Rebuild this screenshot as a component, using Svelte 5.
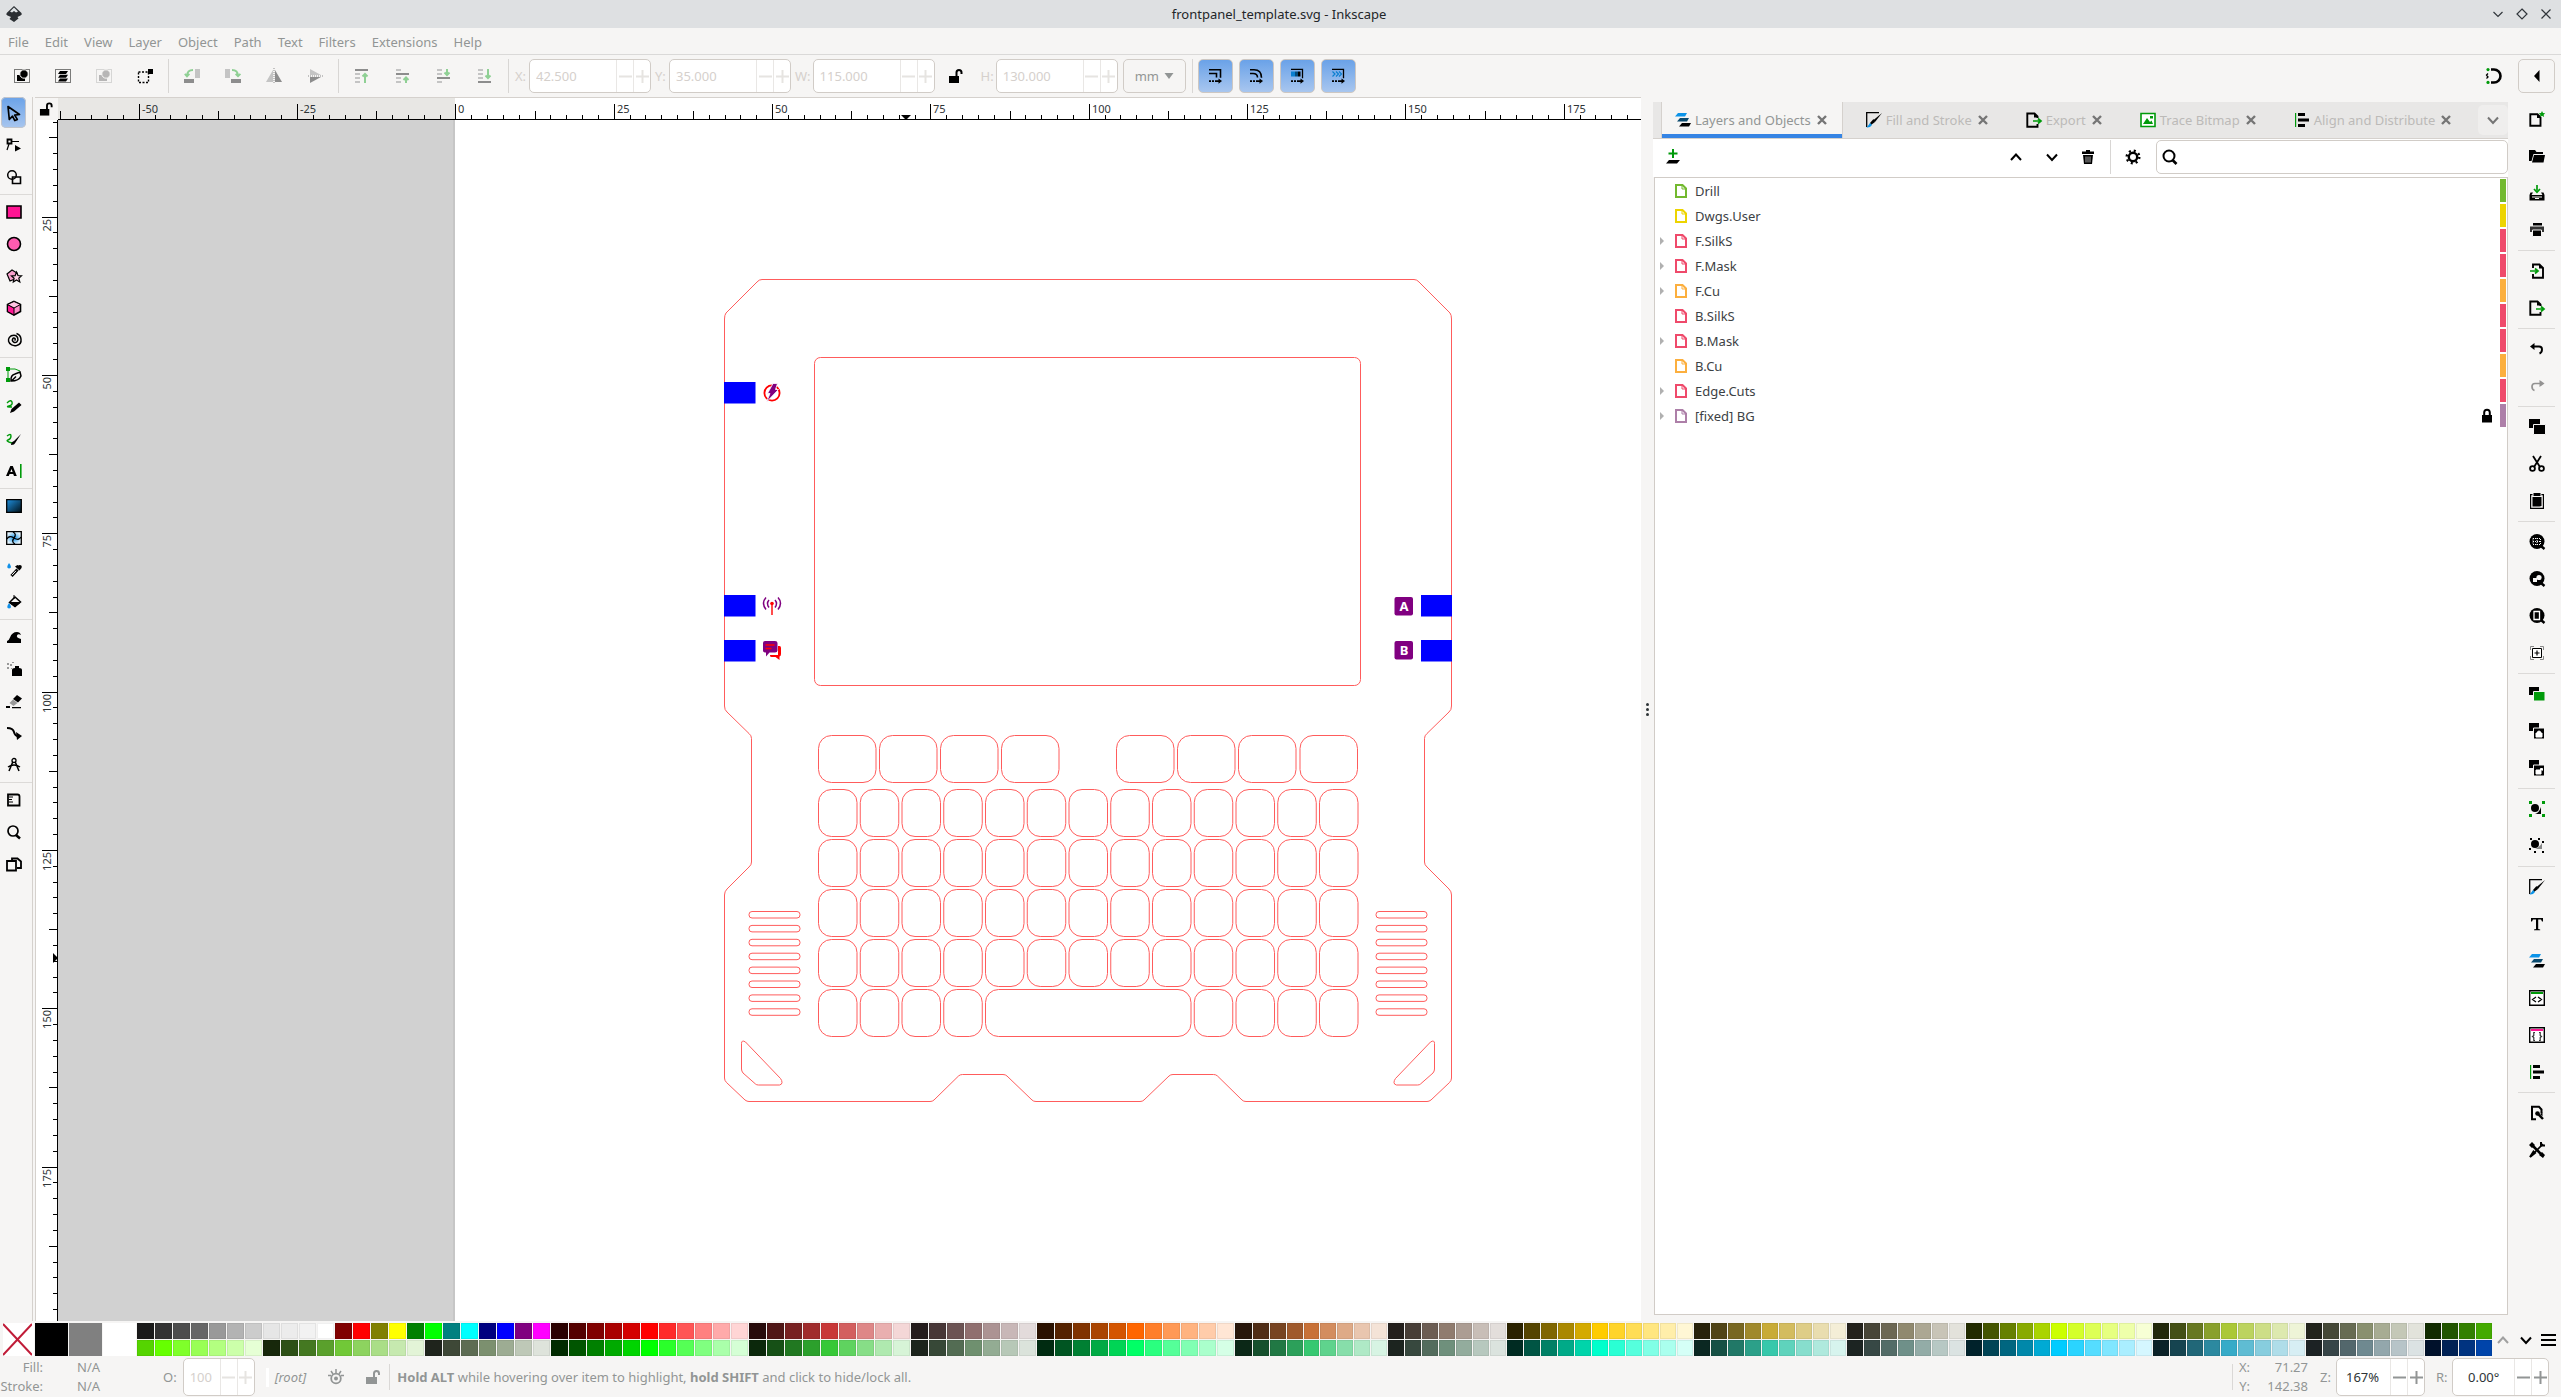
<script>
  const moveArrow = '<path d="M2 12.200h2v1.800H2zM5 12.200h2v1.800H5zM8 12.200h3.500V10.500L15 13.100l-3.500 2.700V14H8z"/>';
  const icons = {
    selAll: '<path d="M.5 1.5h15v13H.5z" fill="none" stroke="#000" stroke-dasharray="1 1"/><path d="M3 7h8v6H3z"/><circle cx="10" cy="6" r="4.2" stroke="#f6f5f4"/>',
    selLayers: '<path d="M.5 1.5h15v13H.5z" fill="none" stroke="#000" stroke-dasharray="1 1"/><path d="M5 3h8l-2 3H3zM5 6.8h8l-2 3H3zM5 10.500h8l-2 3H3z"/>',
    desel: '<g opacity=".25"><path d="M.5 1.5h15v13H.5z" fill="none" stroke="#000" stroke-dasharray="1 1"/><path d="M3 7h8v6H3z"/><circle cx="10" cy="6" r="4.2" stroke="#f6f5f4"/></g>',
    selBox: '<path d="M1.500 4h10v10.500h-10z" fill="none" stroke="#000" stroke-width="1.400" stroke-dasharray="2 1.500"/><path d="M11 1h5v5h-5z"/>',
    rotL: '<path d="M0 11h10v4H0z" fill="#8d8d8d"/><path d="M11 1h5v9h-5z" fill="#c4c4c4"/><path d="M9 2Q3 2 3 8M.8 5.800L3 8.300l2.400-2.500" fill="none" stroke="#8fd094" stroke-width="1.800"/>',
    rotR: '<path d="M6 11h10v4H6z" fill="#8d8d8d"/><path d="M0 1h5v9H0z" fill="#c4c4c4"/><path d="M7 2q6 0 6 6M10.600 5.800L13 8.300l2.400-2.500" fill="none" stroke="#8fd094" stroke-width="1.800"/>',
    flipH: '<path d="M7 2v12H0z" fill="#c4c4c4"/><path d="M9 2v12h7z" fill="#8d8d8d"/><path d="M8 0v16" stroke="#8d8d8d" stroke-dasharray="1 1"/>',
    flipV: '<path d="M3 1v6h11z" fill="#c4c4c4"/><path d="M3 15V9h11z" fill="#8d8d8d"/><path d="M1 8h15" stroke="#8d8d8d" stroke-dasharray="1 1"/>',
    top: '<path d="M1 1h13v2H1z" fill="#8d8d8d"/><path d="M1 5h5v2H1zM1 9h5v2H1zM1 13h5v2H1z" fill="#c4c4c4"/><path d="M11 15V6M8.500 8.500L11 6l2.500 2.500" fill="none" stroke="#8fd094" stroke-width="2"/>',
    raise: '<path d="M1 5h13v2H1z" fill="#8d8d8d"/><path d="M1 1h5v2H1zM1 9h5v2H1zM1 13h5v2H1z" fill="#c4c4c4"/><path d="M11 15V9.500M8.500 12L11 9.500 13.500 12" fill="none" stroke="#8fd094" stroke-width="2"/>',
    lower: '<path d="M1 9h13v2H1z" fill="#8d8d8d"/><path d="M1 1h5v2H1zM1 5h5v2H1zM1 13h5v2H1z" fill="#c4c4c4"/><path d="M11 1v6M8.500 4.500L11 7l2.500-2.500" fill="none" stroke="#8fd094" stroke-width="2"/>',
    bottom: '<path d="M1 13h13v2H1z" fill="#8d8d8d"/><path d="M1 1h5v2H1zM1 5h5v2H1zM1 9h5v2H1z" fill="#c4c4c4"/><path d="M11 1v9M8.500 7.500L11 10l2.500-2.500" fill="none" stroke="#8fd094" stroke-width="2"/>',
    unlock: '<path d="M1 8h10v7H1z"/><path d="M8.500 8V4.500a2.500 2.500 0 0 1 5 0V6" fill="none" stroke="#000" stroke-width="2"/>',
    lock: '<path d="M3 7h10v7.500H3z"/><path d="M5.200 7V4.500a2.800 2.800 0 0 1 5.600 0V7" fill="none" stroke="#000" stroke-width="2"/>',
    tStroke: '<path d="M2 1.800h11.500v8M2 5.500h7.500v4" fill="none" stroke="#000" stroke-width="1.600"/>' + moveArrow,
    tCorner: '<path d="M2 1.800h4q7.500 0 7.500 8M2 5.500h3q4.500 0 4.500 4" fill="none" stroke="#000" stroke-width="1.600"/>' + moveArrow,
    tGrad: '<path d="M2 1.300h11.500v9" fill="none" stroke="#000" stroke-width="1.300"/><path d="M2 3.500h4v5H2z" fill="#0b7fd0"/><path d="M6 3.500h3v5H6z" fill="#054b7c"/><path d="M9 3.500h2.500v5H9z"/>' + moveArrow,
    tPat: '<path d="M2 1.300h11.500v9" fill="none" stroke="#000" stroke-width="1.300"/><path d="M2.500 3.500L5 6 2.500 8.500M6 3.500L8.500 6 6 8.500M9 3.500L11.500 6 9 8.500" fill="none" stroke="#0b7fd0" stroke-width="1.200"/>' + moveArrow,
    snap: '<path d="M6 1.500h3a6.500 6.500 0 0 1 0 13H6" fill="none" stroke="#000" stroke-width="2.600"/><path d="M3 5.500L1.500 7 3 9l-1.500 1.500" fill="none" stroke="#000" stroke-width="1.300"/><circle cx="3" cy="1.600" r="1.600" fill="#009a0a"/><circle cx="3" cy="14.400" r="1.600" fill="#009a0a"/>',
    tri: '<path d="M10.500 2v12L5 8z"/>',
    arrow: '<path d="M2 1.500l11.500 8-4.800.6 2.600 4.300-2.500 1.200-2.300-4.400-3.200 3.300z" fill="none" stroke="#000" stroke-width="1.700" stroke-linejoin="round"/>',
    node: '<path d="M1.500 2.500h4v4h-4z" fill="none" stroke="#000" stroke-width="1.800"/><path d="M6 4.500h7M3 7q-1 3-2 6" fill="none" stroke="#000" stroke-width="1.200"/><path d="M9 8l6 3.500-6 3z"/>',
    shapes: '<circle cx="6" cy="6" r="4.300" fill="none" stroke="#000" stroke-width="1.500"/><path d="M6.500 8h8v6.500h-8z" fill="none" stroke="#000" stroke-width="1.600"/>',
    rect: '<path d="M1 2h14v12H1z" fill="#ff1493" stroke="#000" stroke-width="1.600"/>',
    circle: '<circle cx="8" cy="8" r="6.500" fill="#ff5cb0" stroke="#000" stroke-width="1.600"/>',
    star: '<path d="M1 6l5-4 5 3v5l-7 3z" fill="#f8a0cc" stroke="#000" stroke-width="1.200"/><path d="M10.500 4l1.500 3.500 3.500.3-2.700 2.400 1 3.800-3.300-2-3.200 2 .8-3.800L5.500 8l3.600-.4z" fill="#ffd0e6" stroke="#000" stroke-width="1.200"/>',
    cube: '<path d="M8 1.500l6.500 3v7L8 15l-6.500-3.500v-7z" fill="#ff8cc8" stroke="#000" stroke-width="1.600"/><path d="M1.500 4.500L8 8v7l-6.500-3.500z" fill="#ff1493" stroke="#000"/><path d="M8 8l6.500-3.500L8 1.500l-6.500 3z" fill="#ffc4e2" stroke="#000"/>',
    spiral: '<path d="M8.500 8.500a1.300 1.300 0 1 0-1.800-1.600c-1.300 2.800 2.300 4.800 4.300 2.800s.7-6.400-3-6.400C3.500 3.300 2 6.800 2.600 9.300c.9 3.400 4.600 4.900 8 4.200 3.200-.8 4.800-3.600 4.400-6.500-.3-2.600-2-4.700-4.500-5.500" fill="none" stroke="#000" stroke-width="1.500"/>',
    pen: '<path d="M2 3v9M2 2q8-1 12 2" fill="none" stroke="#009a0a"/><path d="M0 0h4v4H0zM0 11h4v4H0z" fill="#009a0a"/><path d="M5 14q-.5-6 4-7l5-2 1 4q-2 5-10 5zM5.500 14L10 9.500" fill="none" stroke="#000" stroke-width="1.500"/>',
    pencil: '<path d="M1 4q4-4 5-1t-3 4 3 1" fill="none" stroke="#009a0a" stroke-width="1.400"/><path d="M4 14l1.500-4L13 3.500l2.500 2.500L8 12.500z"/>',
    brush: '<path d="M1 5q4-3 4 0t-3 4 4 3" fill="none" stroke="#009a0a" stroke-width="1.400"/><path d="M5 14q0-3 3-4l7-7-5.500 8.500q-1 2.500-4.500 2.500z"/>',
    text: '<path d="M0 13L4.300 3h2.500l4 10H8l-.8-2H3.600l-.8 2zM4.300 9h2.300L5.500 6z"/><path d="M14 1h1.600v14H14z" fill="#009a0a"/>',
    grad: '<defs><linearGradient id="ga" x2="1" y2="1"><stop stop-color="#1e90e0"/><stop offset="1" stop-color="#001018"/></linearGradient></defs><path d="M.7 1.700h14.600v12.600H.7z" fill="url(#ga)" stroke="#000" stroke-width="1.300"/>',
    mesh: '<defs><radialGradient id="gm"><stop stop-color="#0a90ea"/><stop offset="1" stop-color="#e6f4fd"/></radialGradient></defs><path d="M.7 1.700h14.600v12.600H.7z" fill="url(#gm)" stroke="#000" stroke-width="1.300"/><path d="M8 8Q3 5 1 9M8 8q5 3 7-1M8 8q3-4-1-6M8 8q-3 4 1 6" fill="none" stroke="#000" stroke-width="1.300"/>',
    dropper: '<path d="M3 1q4 5 0 5.500Q-.5 6 3 1z" fill="#1090e8"/><path d="M5.500 14l6-6.500" stroke="#000" stroke-width="3"/><path d="M9 4.500l4.500 4 2-2.500q1-3-2-3l-1 .5-1-.5z"/><path d="M6 13.200l4-4.400" stroke="#fff"/>',
    bucket: '<path d="M3 9q4 5 0 5.500Q-.5 14 3 9z" fill="#1090e8"/><path d="M3.500 8.500L9 3l5.500 5L9 12.500z" fill="none" stroke="#000" stroke-width="1.500"/><path d="M4 8.500h10L9 12.500zM8 5V1" stroke="#000"/>',
    tweak: '<path d="M1 14v-2q2-.5 3-3.500Q6 3 11 3q3 0 4 3-3-1.500-4 .5t4 3.500v4z"/>',
    spray: '<path d="M6 9q0-2 3-2V5h4v2q3 0 3 2v6H6z"/><path d="M1 2h2v2H1zM4 3h2v2H4zM1 6h2v2H1zM5 7h1v1H5zM6 1h2v1H6z" fill="#999"/>',
    eraser: '<path d="M7 6l4-4 5 3.500-4 4z"/><path d="M7 6.500L3.500 10l4 3L11.500 10z" fill="#999"/><path d="M0 13h4v2H0zM6 14h9v1.300H6z"/>',
    conn: '<path d="M1 3q6 0 7 4t4 4" fill="none" stroke="#000" stroke-width="2"/><path d="M10 7l6 4-5 4z"/>',
    measure: '<path d="M8 2L3 14M8 2l5 12M2 10q6-4 12 0" fill="none" stroke="#000" stroke-width="1.500"/><circle cx="8" cy="3.500" r="2" fill="#fff" stroke="#000" stroke-width="1.300"/>',
    pages: '<path d="M2 2.500h9.500q2 0 2 2v9H2z" fill="none" stroke="#000" stroke-width="1.800"/><path d="M3 5h4M3 7.500h3M3 10h4" stroke="#000" stroke-width="1.200"/>',
    zoom: '<circle cx="7" cy="7" r="5" fill="none" stroke="#000" stroke-width="1.700"/><path d="M10 11l4 3.500" stroke="#000" stroke-width="2.500"/>',
    page2: '<path d="M6 4V2.500h5.500l3.500 3V12h-4M1 5h9v9.500H1z" fill="none" stroke="#000" stroke-width="1.800"/>',
    newdoc: '<path d="M1.300 3.300h7.200l3 3v8.400H1.300z" fill="none" stroke="#000" stroke-width="1.900"/><path d="M8 3v4h4z"/><path d="M13 0l1 2 2.200.2-1.600 1.500.5 2.200L13 4.800l-2 1.100.4-2.200L9.800 2.200 12 2z" fill="#009a0a"/>',
    open: '<path d="M0 2h6l1.500 2H14v2H4.500L2.500 13H0z"/><path d="M5 7h11l-1.500 7.500H3z"/>',
    save: '<path d="M8 0v5.500M5 4l3 3.300L11 4" fill="none" stroke="#009a0a" stroke-width="1.700"/><path d="M1.500 7.500H4L2.500 10h11L12 7.500h2.500L15.500 10v5.500H.5V10z"/><path d="M3 12h10M6 13.500h4" stroke="#f6f5f4"/>',
    print: '<path d="M4 1h9v2.500H4z"/><path d="M1 4.500h14V10H1z" fill="#333"/><path d="M3.500 8h9v6.500h-9z" stroke="#f6f5f4"/>',
    imp: '<path d="M4 5V1.500h6.500L14 5v9.700H4V11" fill="none" stroke="#000" stroke-width="1.900"/><path d="M10 1v4.500h4.500z"/><path d="M1 8h7M6 5.500L9 8l-3 2.500" fill="none" stroke="#009a0a" stroke-width="1.700"/>',
    exp: '<path d="M11.500 6V4.500l-3-3H1.300v13.200h10.200V12" fill="none" stroke="#000" stroke-width="1.900"/><path d="M8 1v4.500h4.500z"/><path d="M7 9h7M12 6.500L15 9l-3 2.500" fill="none" stroke="#009a0a" stroke-width="1.700"/>',
    undo: '<path d="M4 5.500h6q3 0 3 3t-2.500 4" fill="none" stroke="#000" stroke-width="1.900"/><path d="M5.500 2v7L1 5.500z"/>',
    redo: '<g opacity=".4"><path d="M12 5.500H6q-3 0-3 3t2.500 4" fill="none" stroke="#000" stroke-width="1.700"/><path d="M10.500 2v7L15.500 5.500z"/></g>',
    copy: '<path d="M0 0h11v9H0z"/><path d="M4.500 5.500h12v10h-12z" stroke="#f6f5f4"/>',
    cut: '<path d="M4 0l7 11M12 0L5 11" stroke="#000" stroke-width="1.800"/><circle cx="3.500" cy="12.500" r="2.400" fill="none" stroke="#000" stroke-width="1.800"/><circle cx="12.500" cy="12.500" r="2.400" fill="none" stroke="#000" stroke-width="1.800"/>',
    paste: '<path d="M3.500 1.600H1.600v13.800h12.800V1.600h-2" fill="none" stroke="#000" stroke-width="1.200"/><path d="M3.500 4h9v9q-1 0-2 .5h-7zM4.500 0h7v3h-7z"/>',
    zoomSel: '<circle cx="8" cy="7.500" r="7.500"/><path d="M12 12l3.500 3" stroke="#000" stroke-width="2.400"/><path d="M4 4.500h7.500v6H4z" fill="none" stroke="#fff" stroke-dasharray="1 1"/><path d="M4 7.500h8M8 4v7" stroke="#fff" stroke-dasharray="1 1"/>',
    zoomDraw: '<circle cx="8" cy="7.500" r="7.500"/><path d="M12 12l3.500 3" stroke="#000" stroke-width="2.400"/><circle cx="10" cy="6.500" r="2.600" fill="#f6f5f4"/><path d="M4 7h4v4H4z" fill="#f6f5f4"/>',
    zoomPage: '<circle cx="8" cy="7.500" r="7.500"/><path d="M12 12l3.500 3" stroke="#000" stroke-width="2.400"/><path d="M5 3.500h5.500v8H5z" fill="none" stroke="#fff" stroke-width="1.300"/>',
    zoomCenter: '<path d="M3.500 3.500h9v9h-9z" fill="#fff" stroke="#000"/><path d="M8 5.500v5M5.500 8h5" stroke="#000" stroke-width="1.200"/><path d="M1.500 5V1.500H5M11 1.500h3.500V5M14.500 11v3.500H11M5 14.500H1.500V11" fill="none" stroke="#888"/>',
    dup: '<path d="M0 1h10v8H0z"/><path d="M4.500 5.500H16V15H4.500z" fill="#009a0a" stroke="#f6f5f4"/>',
    clone: '<path d="M0 0h10v8H0z"/><path d="M4.500 5h11v11h-11z" stroke="#f6f5f4"/><path d="M7 10h6v4H7zM8.500 10V8.700q1.500-1.500 3 0V10" fill="#fff" stroke="#fff"/>',
    unclone: '<path d="M0 0h10v8H0z"/><path d="M4.500 5h11v11h-11z" stroke="#f6f5f4"/><path d="M7 10h5v4H7zM11.500 10V8.500h2v2" fill="#fff" stroke="#fff"/>',
    group: '<path d="M0 0h3v3H0zM13 0h3v3h-3zM0 13h3v3H0zM13 13h3v3h-3z" fill="#009a0a"/><circle cx="6" cy="7" r="4"/><path d="M12 6v7H6q4-1 6-7z"/>',
    ungroup: '<path d="M1 0h2v2H1zM9 0h2v2H9zM13 3h2v2h-2zM0 10h2v2H0zM5 13h2v2H5zM13 13h2v2h-2z"/><circle cx="6" cy="6" r="4"/><path d="M13 5v6H6q4-1 7-6z" fill="#888"/>',
    fill: '<path d="M.7 15V.7H13" fill="none" stroke="#000" stroke-width="1.300"/><path d="M16 1L9 10l-2-1.500z"/><path d="M7.500 7L9 10l-4 3-1-2z"/><path d="M4 11l2 2q-2 3-5.500 2.500Q2 14 4 11z" fill="#0b93e8"/>',
    tt: '<path d="M2 2h12v3.500h-1L12 3.500H9.200V13l2 .5v.8H5v-.8l2-.5V3.500H4L3 5.500H2z"/>',
    layers: '<path d="M3 1h9l-2 3.500H0z" fill="#0b93e8"/><path d="M5 6h9l-2 3.500H2z" fill="#0a4a6e"/><path d="M7 11h9l-2 3.500H4z"/>',
    xml: '<path d="M.7.700h14.600v14.600H.7z" fill="#fff" stroke="#000" stroke-width="1.400"/><path d="M2 2h12v2H2z" fill="#009a0a"/><path d="M7 7l-3.500 2.500L7 12M9 7l3.500 2.500L9 12" fill="none" stroke="#000" stroke-width="1.200"/>',
    selectors: '<path d="M.7.700h14.600v14.600H.7z" fill="#fff" stroke="#000" stroke-width="1.400"/><path d="M2 2h12v2H2z" fill="#ff1493"/><path d="M6 5.500H4.800v3L3.500 9.500l1.300 1v3H6M10 5.500h1.200v3l1.300 1-1.300 1v3H10" fill="none" stroke="#333" stroke-width="1.200"/>',
    align: '<path d="M1 1h1.200v14H1z" fill="#009a0a"/><path d="M4 1h7v3H4zM4 6.500h11v3H4zM4 12h7v3H4z"/>',
    docprops: '<path d="M12.500 8V4.500L10 1.800H3v12.500h4" fill="none" stroke="#000" stroke-width="2"/><path d="M9 9l5 5" stroke="#000" stroke-width="2.400"/><circle cx="8.500" cy="8.500" r="2.300"/><path d="M11 9l2.500-1.500v4z"/>',
    prefs: '<path d="M3 3l10 10" stroke="#000" stroke-width="2.600"/><path d="M2 14L14 2" stroke="#000" stroke-width="1.600"/><path d="M1 15l5-4-1.500-1.500z" stroke="#000" stroke-width="2"/><path d="M0 3l3-3 3 3-3 3zM10 13l3-3 3 3-2 3z"/><path d="M12 0v3.500h4" fill="none" stroke="#000" stroke-width="2"/>',
    trace: '<path d="M1 1.500h14v13H1z" fill="#fff" stroke="#009a0a" stroke-width="1.600"/><path d="M3 12l4-6 3 4 1.500-1.500L13 12zM10 4h3v2.500h-3z" fill="#009a0a"/>',
    addLayer: '<path d="M8 0v9M3.500 4.500h9" stroke="#009a0a" stroke-width="2"/><path d="M4 11h11l-3 3.500H1z"/>',
    up: '<path d="M3 11l5-5.500 5 5.500" fill="none" stroke="currentColor" stroke-width="2"/>',
    down: '<path d="M3 5.500L8 11l5-5.500" fill="none" stroke="currentColor" stroke-width="2"/>',
    trash: '<path d="M2 2.500h12V5H2zM6 1h4v2H6z"/><path d="M3 6h10l-1 9H4z"/><path d="M6 7.500v6M8 7.500v6M10 7.500v6" stroke="#aaa"/>',
    gear: '<circle cx="8" cy="8" r="4.200" fill="none" stroke="#000" stroke-width="2.400"/><circle cx="8" cy="8" r="6.300" fill="none" stroke="#000" stroke-width="2.400" stroke-dasharray="2 2.950"/>',
    search: '<circle cx="7" cy="7" r="5.500" fill="none" stroke="#000" stroke-width="2"/><path d="M10.500 11l4 4" stroke="#000" stroke-width="2.600"/>',
    eye: '<circle cx="8" cy="9.500" r="4.800" fill="none" stroke="#929595" stroke-width="1.800"/><circle cx="8" cy="9.500" r="2" fill="#929595"/><path d="M8 0v4M3 2l2 3M13 2l-2 3M0 6.500h3M13 6.500h3" stroke="#929595" stroke-width="1.500"/>',
    statusLock: '<path d="M1 8h11v7H1z" fill="#929595"/><path d="M9 8V4.500a2.500 2.500 0 0 1 5 0V6" fill="none" stroke="#929595" stroke-width="2"/>',
    close: '<path d="M4 4l8 8M12 4l-8 8" stroke="#757575" stroke-width="2.400"/>',
    logo: '<path d="M8 0l7.500 7q1 1.500-1 2.500l-3 1.500 1 1.500L8 16l-4.500-3L5 11 1.500 9.500Q-.5 8.500.7 7z" fill="#2b2f33"/><path d="M8 1.500L4 5.500l2 1 2-1.500 2 1.500 2-1z" fill="#dfe3e6"/>'
  };

  const menus = ['File', 'Edit', 'View', 'Layer', 'Object', 'Path', 'Text', 'Filters', 'Extensions', 'Help'];
  const bar = [
    [['selAll', 'Select all'], ['selLayers', 'Select all in all layers'], ['desel', 'Deselect'], ['selBox', 'Toggle touch selection']],
    [['rotL', 'Rotate left'], ['rotR', 'Rotate right'], ['flipH', 'Flip horizontal'], ['flipV', 'Flip vertical']],
    [['top', 'Raise to top'], ['raise', 'Raise'], ['lower', 'Lower'], ['bottom', 'Lower to bottom']]
  ];
  const toggles = [['tStroke', 'Scale stroke width'], ['tCorner', 'Scale rounded corners'], ['tGrad', 'Move gradients'], ['tPat', 'Move patterns']];
  const tools = [
    ['arrow', 'node', 'shapes'],
    ['rect', 'circle', 'star', 'cube', 'spiral'],
    ['pen', 'pencil', 'brush', 'text'],
    ['grad', 'mesh', 'dropper', 'bucket'],
    ['tweak', 'spray', 'eraser', 'conn', 'measure'],
    ['pages', 'zoom', 'page2']
  ];
  const commands = [
    ['newdoc', 'open', 'save', 'print'],
    ['imp', 'exp'],
    ['undo', 'redo'],
    ['copy', 'cut', 'paste'],
    ['zoomSel', 'zoomDraw', 'zoomPage', 'zoomCenter'],
    ['dup', 'clone', 'unclone'],
    ['group', 'ungroup'],
    ['fill', 'tt', 'layers', 'xml', 'selectors', 'align'],
    ['docprops', 'prefs']
  ];
  const tabs = [
    ['layers', 'Layers and Objects'],
    ['fill', 'Fill and Stroke'],
    ['exp', 'Export'],
    ['trace', 'Trace Bitmap'],
    ['align', 'Align and Distribute']
  ];
  const layers = [
    { name: 'Drill', color: '#73b92f' },
    { name: 'Dwgs.User', color: '#edd400' },
    { name: 'F.SilkS', color: '#ef4a6b', kids: true },
    { name: 'F.Mask', color: '#ef4a6b', kids: true },
    { name: 'F.Cu', color: '#fcaf3e', kids: true },
    { name: 'B.SilkS', color: '#ef4a6b' },
    { name: 'B.Mask', color: '#ef4a6b', kids: true },
    { name: 'B.Cu', color: '#fcaf3e' },
    { name: 'Edge.Cuts', color: '#ef4a6b', kids: true },
    { name: '[fixed] BG', color: '#ad7fa8', kids: true, locked: true }
  ];

  // Ruler ticks: one every 2.5 mm, 25 mm = 158.33 px at 167 %
  let hWidth = $state(0);
  let vHeight = $state(0);
  const ticks = (origin, from, length) => {
    const out = [];
    for (let k = from; ; k++) {
      const at = Math.round(origin + (k * 158.333) / 10);
      if (at >= length) return out;
      out.push({ at, size: k % 10 === 0 ? 2 : k % 5 === 0 ? 1 : 0, label: k * 2.5, fits: at + 26 < length });
    }
  };
  const hTicks = $derived(ticks(397.4, -25, hWidth));
  const vTicks = $derived(ticks(-61.8, 4, vHeight));

  // Palette: per hue a vivid, a muted and a greyish ramp
  const hueRamps = (h) => [
    ...[8.4, 16.7, 25, 33.3, 41.6, 50, 58.2, 66.7, 75, 83.3, 91.8].map((l) => `hsl(${h} 100% ${l}%)`),
    ...[10, 20, 30, 40, 50, 60, 70, 80, 90].map((l) => `hsl(${h} 57% ${l}%)`),
    ...[12.5, 25, 37.5, 50, 62.5, 75, 87.5].map((l) => `hsl(${h} 13% ${l}%)`)
  ];
  const greys = ['#1a1a1a', '#333', '#4d4d4d', '#666', '#999', '#b3b3b3', '#ccc', '#e6e6e6', '#ececec', '#f2f2f2', '#fff'];
  const basics = ['#800000', '#f00', '#808000', '#ff0', '#008000', '#0f0', '#008080', '#0ff', '#000080', '#00f', '#800080', '#f0f'];
  const swatches = [...greys, ...basics, ...[0, 24, 48, 72, 96, 120, 144, 168, 192, 216].flatMap(hueRamps)].slice(0, 270);

  // Keyboard cut-outs
  const col = (c) => 818.5 + c * 41.75;
  const keys = [];
  for (const x of [818.5, 879.5, 940.5, 1001.5, 1116.5, 1177.5, 1238.5, 1300]) keys.push({ x, y: 735.5, w: 57.5 });
  for (let r = 0; r < 5; r++)
    for (let c = 0; c < 13; c++) if (r < 4 || c < 4 || c > 8) keys.push({ x: col(c), y: 789.5 + r * 50, w: 38.5 });
  keys.push({ x: col(4), y: 989.5, w: 205.5 });
  const vents = Array.from({ length: 8 }, (_, i) => 911.5 + i * 13.9);
</script>

{#snippet icon(name)}
  <svg class="icon" viewBox="0 0 16 16" aria-hidden="true">{@html icons[name]}</svg>
{/snippet}

{#snippet spin(label, value, cls)}
  <label class="field {cls}">
    <span class="lbl">{label}</span>
    <span class="spin">
      <input type="text" {value} />
      <button type="button" aria-label="Decrease {label}"><svg class="pm" viewBox="0 0 13 13"><path d="M0 6.500h13" /></svg></button>
      <button type="button" aria-label="Increase {label}"><svg class="pm" viewBox="0 0 13 13"><path d="M0 6.500h13M6.500 0v13" /></svg></button>
    </span>
  </label>
{/snippet}

{#snippet halfBoard()}
  <path d="M1088 279.500H762q-3 0-5 2.500L726 313q-1.500 2-1.500 6V706q0 4 2.500 6L749 733.500q2.500 2 2.500 5V862q0 3-2.500 5L727 889q-2.500 2.500-2.500 6V1078q0 2.500 2 4.500L745 1100q2 1.500 4 1.500H930q2.500 0 4-1.500L958.500 1076q1.500-1.500 4-1.500H1003q2.500 0 4 1.500L1032 1100q1.500 1.500 4 1.500H1088" />
  {#each vents as y}
    <rect x="749" {y} width="51" height="6.500" rx="3" />
  {/each}
  <path d="M741.500 1069V1043.500q0-4 4-1.500L780.500 1078.500q1.500 2 1.500 4t-2.500 2.500H758.500q-2 0-3-1L743 1073q-1.500-2-1.500-4z" />
{/snippet}

<div class="app">
  <header class="title">
    {@render icon('logo')}
    <h1>frontpanel_template.svg - Inkscape</h1>
    <div class="winbtns">
      <button type="button" aria-label="Minimize"><svg viewBox="0 0 12 12"><path d="M1.500 4L6 8.500 10.500 4" /></svg></button>
      <button type="button" aria-label="Maximize"><svg viewBox="0 0 12 12"><path d="M6 1l5 5-5 5-5-5z" /></svg></button>
      <button type="button" aria-label="Close"><svg viewBox="0 0 12 12"><path d="M1.500 1.500l9 9M10.500 1.500l-9 9" /></svg></button>
    </div>
  </header>

  <nav class="menu">
    {#each menus as m}<button type="button">{m}</button>{/each}
  </nav>

  <div class="body">
    <div class="main">
      <div class="toolbar">
        {#each bar as grp}
          {#each grp as [n, t]}
            <button type="button" class="tb" aria-label={t}>{@render icon(n)}</button>
          {/each}
          <i class="vsep"></i>
        {/each}
        {@render spin('X:', '42.500', 'dim')}
        {@render spin('Y:', '35.000', 'dim')}
        {@render spin('W:', '115.000', 'dim')}
        <button type="button" class="ratio" aria-label="Lock ratio">{@render icon('unlock')}</button>
        {@render spin('H:', '130.000', 'dim')}
        <span class="unit">
          <select aria-label="Unit"><option>mm</option></select>
          <svg viewBox="0 0 12 8"><path d="M0 0h12L6 8z" /></svg>
        </span>
        <i class="vsep unitsep"></i>
        {#each toggles as [n, t]}
          <button type="button" class="toggle" aria-pressed="true" aria-label={t}>{@render icon(n)}</button>
        {/each}
        <button type="button" class="tb snap" aria-label="Snapping">{@render icon('snap')}</button>
      </div>

      <div class="work">
        <div class="tools">
          {#each tools as grp, g}
            {#if g}<hr />{/if}
            {#each grp as n}
              <button type="button" class:active={n === 'arrow'} aria-label={n}>{@render icon(n)}</button>
            {/each}
          {/each}
        </div>

        <div class="frame">
          <div class="corner">{@render icon('unlock')}</div>
          <div class="ruler" bind:clientWidth={hWidth}>
            <svg class="hruler" aria-label="Horizontal ruler">
              <rect class="page" x="397" width="100%" height="22" />
              {#each hTicks as t}
                <rect x={t.at} y={[17, 13, 6][t.size]} width="1" height={[4, 8, 15][t.size]} />
                {#if t.size === 2 && t.fits}<text x={t.at + 3} y="15">{t.label}</text>{/if}
              {/each}
              <rect y="21" width="100%" height="1" />
              <path d="M843 17h10l-5 5z" />
            </svg>
          </div>
          <div class="ruler" bind:clientHeight={vHeight}>
            <svg class="vruler" aria-label="Vertical ruler">
              {#each vTicks as t}
                <rect x={[17, 13, 6][t.size]} y={t.at} width={[4, 8, 15][t.size]} height="1" />
                {#if t.size === 2 && t.fits}<text transform="translate(15 {t.at + 2}) rotate(-90)" text-anchor="end">{t.label}</text>{/if}
              {/each}
              <rect x="21" width="1" height="100%" />
              <path d="M17 833v10l5-5z" />
            </svg>
          </div>
          <svg class="canvas" viewBox="58 120 1583 1201" preserveAspectRatio="xMinYMin slice">
            <rect x="453" y="120" width="2" height="1201" fill="#c6c6c6" />
            <rect x="455" y="120" width="1190" height="1201" fill="#fff" />
            <g class="cut">
              {@render halfBoard()}
              <g transform="translate(2176 0) scale(-1 1)">{@render halfBoard()}</g>
              <rect x="814.500" y="357.500" width="546" height="328" rx="6" />
              {#each keys as k}
                <rect x={k.x} y={k.y} width={k.w} height="47" rx="13" />
              {/each}
            </g>
            <g fill="#00f">
              <rect x="724" y="382" width="31.500" height="21.500" />
              <rect x="724" y="595" width="31.500" height="21.500" />
              <rect x="724" y="640" width="31.500" height="21.500" />
              <rect x="1421" y="595" width="31" height="21.500" />
              <rect x="1421" y="640" width="31" height="21.500" />
            </g>
            <circle cx="772" cy="393" r="7.600" fill="none" stroke="#f00" stroke-width="1.800" />
            <path d="M773 383.500h4.500l-2 6h3L766.500 402l3.500-8.500h-2.500z" fill="#800080" stroke="#fff" stroke-width=".8" />
            <g fill="none" stroke="#800080" stroke-width="1.500">
              <path d="M766 597.500q-5 5.500 0 12M769 600q-3 3.500 0 7.500M778 597.500q5 5.500 0 12M775 600q3 3.500 0 7.500" />
            </g>
            <circle cx="772" cy="603.500" r="1.800" fill="#f00" />
            <path d="M772 603v12" stroke="#f00" stroke-width="1.400" />
            <path d="M770 655h8l0-9h1.500q1.500 0 1.500 2v6q0 2-1.500 2.500V660l-4-3h-4q-2 0-1.500-2z" fill="#f00" />
            <path d="M765 641h10q2.500 0 2.500 2v7.500q0 2-2.500 2h-5.500L766 656.500v-4q-3 0-3-2V643q0-2 2-2z" fill="#800080" />
            <path d="M765.500 645h9M765.500 648.500h6" stroke="#f00" stroke-width="1.300" />
            <g class="badge">
              <rect x="1394.500" y="597" width="18.500" height="18.500" rx="2" />
              <rect x="1394.500" y="641" width="18.500" height="18.500" rx="2" />
              <text x="1404" y="611">A</text>
              <text x="1404" y="655">B</text>
            </g>
          </svg>
        </div>

        <div class="splitter"><i></i><i></i><i></i></div>

        <aside class="panel">
          <div class="tabs">
            {#each tabs as [n, t], i}
              <div class="tab" class:on={i === 0}>
                {@render icon(n)}
                <button type="button" class="tabname">{t}</button>
                <button type="button" class="x" aria-label="Close {t}">{@render icon('close')}</button>
              </div>
            {/each}
            <button type="button" class="more" aria-label="More dialogs">{@render icon('down')}</button>
          </div>
          <div class="actions">
            <button type="button" aria-label="Add layer">{@render icon('addLayer')}</button>
            <span class="grow"></span>
            <button type="button" aria-label="Move up">{@render icon('up')}</button>
            <button type="button" aria-label="Move down">{@render icon('down')}</button>
            <button type="button" aria-label="Delete">{@render icon('trash')}</button>
            <i class="vsep"></i>
            <button type="button" aria-label="Settings">{@render icon('gear')}</button>
            <label class="search">{@render icon('search')}<input type="text" aria-label="Search layers" /></label>
          </div>
          <ul class="list">
            {#each layers as l}
              <li>
                <span class="exp">{#if l.kids}<svg viewBox="0 0 4 8"><path d="M0 0l4 4-4 4z" /></svg>{/if}</span>
                <svg class="doc" viewBox="0 0 12 14" style:color={l.color}>
                  <path d="M1 1h6.500L11 4.500V13H1z" fill="none" stroke="currentColor" stroke-width="2" /><path d="M7 1v4h4" fill="none" stroke="currentColor" />
                </svg>
                <span class="name">{l.name}</span>
                {#if l.locked}{@render icon('lock')}{/if}
                <i class="tag" style:background={l.color}></i>
              </li>
            {/each}
          </ul>
        </aside>
      </div>
    </div>

    <div class="rail">
      <button type="button" class="snapmore" aria-label="Snap options">{@render icon('tri')}</button>
      {#each commands as grp, g}
        {#if g}<hr />{/if}
        {#each grp as n}
          <button type="button" class="cmd" aria-label={n}>{@render icon(n)}</button>
        {/each}
      {/each}
    </div>
  </div>

  <div class="palette">
    <button type="button" class="big none" aria-label="None"><svg viewBox="0 0 29 33"><path d="M0 1l29 31M29 1L0 32" /></svg></button>
    <button type="button" class="big black" aria-label="Black"></button>
    <button type="button" class="big grey" aria-label="50% Grey"></button>
    <button type="button" class="big white" aria-label="White"></button>
    <div class="swatches">
      {#each swatches as c}<button type="button" aria-label={c} style:background={c}></button>{/each}
    </div>
    <div class="palnav">
      <button type="button" class="off" aria-label="Previous">{@render icon('up')}</button>
      <button type="button" aria-label="Next">{@render icon('down')}</button>
      <button type="button" aria-label="Palette menu"><svg class="burger" viewBox="0 0 15 12"><path d="M0 1h15M0 6h15M0 11h15" /></svg></button>
    </div>
  </div>

  <footer class="status">
    <dl class="style">
      <dt>Fill:</dt><dd>N/A</dd>
      <dt>Stroke:</dt><dd>N/A</dd>
    </dl>
    {@render spin('O:', '100', 'opacity')}
    <i class="handle"></i>
    <button type="button" class="root">[root]</button>
    <button type="button" class="si" aria-label="Toggle visibility">{@render icon('eye')}</button>
    <button type="button" class="si" aria-label="Toggle lock">{@render icon('statusLock')}</button>
    <i class="sep"></i>
    <p><b>Hold ALT</b> while hovering over item to highlight, <b>hold SHIFT</b> and click to hide/lock all.</p>
    <i class="sep"></i>
    <dl class="coords">
      <dt>X:</dt><dd>71.27</dd>
      <dt>Y:</dt><dd>142.38</dd>
    </dl>
    {@render spin('Z:', '167%', 'zoomf')}
    {@render spin('R:', '0.00°', 'rotf')}
  </footer>
</div>

<style>
  :global(body) { margin: 0; }
  .app {
    display: flex; flex-direction: column; height: 100vh; overflow: hidden;
    background: #f6f5f4; color: #929595;
    font: 13px/19px "Noto Sans", sans-serif;
  }
  .app * { box-sizing: border-box; }
  button { border: 0; background: none; padding: 0; margin: 0; font: inherit; color: inherit; }
  input, select { font: inherit; color: inherit; border: 0; background: none; padding: 0; margin: 0; min-width: 0; outline: 0; }
  hr { border: 0; margin: 0; }
  .icon { width: 16px; height: 16px; display: block; flex: none; overflow: visible; }

  .title { height: 28px; flex: none; display: grid; grid-template-columns: 1fr auto 1fr; align-items: center; background: #dee0e2; padding: 0 9px 0 6px; color: #232629; }
  .title h1 { font: inherit; margin: 0; }
  .winbtns { display: flex; gap: 12px; justify-content: flex-end; }
  .winbtns svg { width: 12px; height: 12px; display: block; fill: none; stroke: #31363b; stroke-width: 1.2; }

  .menu { height: 27px; flex: none; display: flex; border-bottom: 1px solid #dad9d8; }
  .menu button { padding: 2px 8px 0; }

  .body { flex: 1; min-height: 0; display: flex; }
  .main { flex: 1; min-width: 0; display: flex; flex-direction: column; }
  .toolbar { height: 42px; flex: none; display: flex; align-items: center; padding-left: 1px; }
  .tb { width: 41px; height: 34px; display: grid; place-items: center; }
  .vsep { width: 1px; height: 34px; background: #d8d6d4; margin: 0 2px 0 3px; flex: none; }
  .field { display: flex; align-items: center; gap: 2px; margin-left: 4px; flex: none; }
  .lbl { min-width: 12px; }
  .spin { display: flex; height: 34px; border: 1px solid #d1ccc7; border-radius: 5px; background: #fff; overflow: hidden; }
  .spin input { flex: 1; width: 86px; padding-left: 6px; }
  .spin button { width: 17px; border-left: 1px solid #e9e7e5; display: grid; place-items: center; }
  .pm { width: 13px; height: 13px; stroke: currentColor; stroke-width: 2; display: block; }
  .dim { color: #d5d0cc; }
  .dim .spin { width: 122px; }
  .dim .pm, .opacity .pm { color: #e6e4e1; }
  .ratio { width: 42px; display: grid; place-items: center; }
  .unit { display: flex; align-items: center; width: 63px; height: 34px; margin-left: 5px; border: 1px solid #d1ccc7; border-radius: 5px; padding-left: 11px; flex: none; }
  .unit select { appearance: none; width: 28px; }
  .unit svg { width: 12px; height: 6px; fill: #929595; }
  .unitsep { margin: 0 5px 0 6px; }
  .toggle { width: 35px; height: 34px; margin-right: 6px; display: grid; place-items: center; border: 1px solid #cdc7c2; border-radius: 5px; background: linear-gradient(#6aa2e8, #a8c6ef); flex: none; }
  .snap { margin-left: auto; width: 31px; }

  .work { flex: 1; min-height: 0; display: flex; }
  .tools { width: 35px; flex: none; display: flex; flex-direction: column; background: linear-gradient(90deg, transparent 32px, #d5d1cd 32px, #d5d1cd 33px, transparent 33px); }
  .tools button { width: 25px; height: 31px; margin: 0 0 1px 1px; display: grid; place-items: center; border-radius: 5px; flex: none; }
  .tools .active { background: linear-gradient(#6aa2e8, #a8c6ef); box-shadow: inset 0 0 0 1px #c3c5cb; }
  .tools hr { height: 1px; background: #dcdad8; margin: 1px 3px 1px 0; flex: none; }

  .frame { flex: 1; min-width: 0; display: grid; grid-template: 22px minmax(0, 1fr) / 23px minmax(0, 1fr); padding-top: 1px; background: linear-gradient(#d5d1cd 1px, #f6f5f4 1px); }
  .corner { display: grid; place-items: center; }
  .corner .icon { width: 15px; }
  .ruler { overflow: hidden; }
  .hruler { width: 100%; height: 22px; background: #e8e7e4; display: block; }
  .hruler .page { fill: #fff; }
  .vruler { width: 23px; height: 100%; background: #fff; border-left: 1px solid #d5d1cd; display: block; }
  .hruler text, .vruler text { font-size: 11px; fill: #2e3436; }
  .canvas { width: 100%; height: 100%; background: #d1d1d1; display: block; }
  .cut { fill: none; stroke: #ff5c5c; stroke-width: 1; }
  .badge { fill: #800080; }
  .badge text { fill: #fff; font: bold 13px "Noto Sans", sans-serif; text-anchor: middle; }

  .splitter { width: 12px; flex: none; display: flex; flex-direction: column; align-items: center; justify-content: center; gap: 2px; }
  .splitter i { width: 3px; height: 3px; border-radius: 2px; background: #2e3436; }

  .panel { width: 855px; flex: none; display: flex; flex-direction: column; padding: 5px 0 6px; }
  .tabs { height: 37px; flex: none; display: flex; background: #e8e7e6; border-bottom: 1px solid #d5d1cd; padding-left: 8px; }
  .tab { display: flex; align-items: center; padding: 0 12px 0 13px; margin-right: 10px; color: #bcbab8; }
  .tabname { margin: 0 3px 0 4px; }
  .tab.on { background: #f6f5f4; color: #929595; border: solid #d5d1cd; border-width: 0 1px; box-shadow: inset 0 -4px #3584e4; }
  .more { width: 30px; height: 30px; margin: 3px 0 0 auto; border-radius: 5px; background: #efeeed; display: grid; place-items: center; color: #757575; }
  .actions { height: 38px; flex: none; display: flex; align-items: center; background: #fff; padding: 0 0 2px 2px; color: #000; }
  .actions button { width: 36px; height: 34px; display: grid; place-items: center; }
  .actions .vsep { margin: 0 4px; }
  .grow { flex: 1; }
  .search { width: 352px; height: 34px; margin-left: 5px; border: 1px solid #d1ccc7; border-radius: 5px; display: flex; align-items: center; gap: 6px; padding: 0 5px; }
  .search input { flex: 1; }
  .list { flex: 1; min-height: 0; margin: 0 0 0 1px; padding: 0; list-style: none; background: #fff; border: 1px solid #d1ccc7; color: #3c4144; }
  .list li { height: 25px; display: flex; align-items: center; padding-left: 5px; }
  .exp { width: 15px; }
  .exp svg { width: 4px; height: 8px; display: block; fill: #b0b0b0; }
  .doc { width: 12px; height: 14px; }
  .name { flex: 1; padding: 1px 0 0 8px; }
  .tag { width: 6px; height: 23px; margin: 0 1px 0 5px; }

  .rail { width: 53px; flex: none; display: flex; flex-direction: column; padding: 4px 6px 0 10px; }
  .snapmore { height: 34px; border: 1px solid #d1ccc7; border-radius: 5px; display: grid; place-items: center; margin-bottom: 7px; flex: none; }
  .cmd { height: 37px; display: grid; place-items: center; flex: none; }
  .rail hr { height: 1px; background: #dcdad8; margin: 2px 0 1px; flex: none; }

  .palette { height: 36px; flex: none; display: flex; padding: 2px 5px 1px 3px; }
  .big { width: 33px; height: 33px; margin-right: 1px; flex: none; }
  .none { width: 31px; background: #fff; }
  .none svg { width: 29px; height: 33px; display: block; stroke: #c01c38; stroke-width: 2; fill: none; }
  .black { background: #000; }
  .grey { background: #808080; }
  .white { background: #fff; }
  .swatches { flex: 1; display: grid; grid-template-columns: repeat(62, minmax(0, 18fr)) repeat(73, minmax(0, 17fr)); grid-template-rows: 16px 16px; row-gap: 1px; }
  .swatches button { margin-right: 1px; box-shadow: inset 0 0 0 1px rgba(0, 0, 0, .06); }
  .palnav { display: flex; align-items: center; gap: 7px; padding-left: 2px; color: #000; flex: none; }
  .palnav .off { color: #a0a0a0; }
  .burger { width: 15px; height: 12px; display: block; stroke: #000; stroke-width: 2; }

  .status { height: 40px; flex: none; display: flex; align-items: center; padding-right: 12px; }
  dl { display: grid; margin: 0; }
  dd { margin: 0; }
  .style { grid-template-columns: 43px auto; column-gap: 34px; text-align: right; width: 159px; justify-content: start; flex: none; }
  .coords { grid-template-columns: auto 58px; text-align: right; margin: 0 8px 0 6px; }
  .status .spin { height: 38px; }
  .opacity { gap: 6px; }
  .opacity .spin { width: 72px; color: #d5d0cc; }
  .zoomf, .rotf { gap: 4px; }
  .zoomf .spin { width: 89px; color: #2e3436; }
  .rotf { margin-left: 11px; }
  .rotf .spin { width: 97px; color: #2e3436; }
  .zoomf .pm, .rotf .pm { color: #929595; }
  .rotf .spin input { padding-left: 15px; }
  .zoomf .spin input { padding-left: 9px; }
  .handle { width: 3px; height: 19px; background: #fff; margin: 0 6px 0 11px; }
  .root { font-style: italic; margin-right: 22px; }
  .si { margin-right: 21px; }
  .si + .si { margin-right: 8px; }
  .sep { width: 1px; height: 26px; background: #dad8d6; }
  .status p { flex: 1; margin: 0 0 0 7px; }
</style>
